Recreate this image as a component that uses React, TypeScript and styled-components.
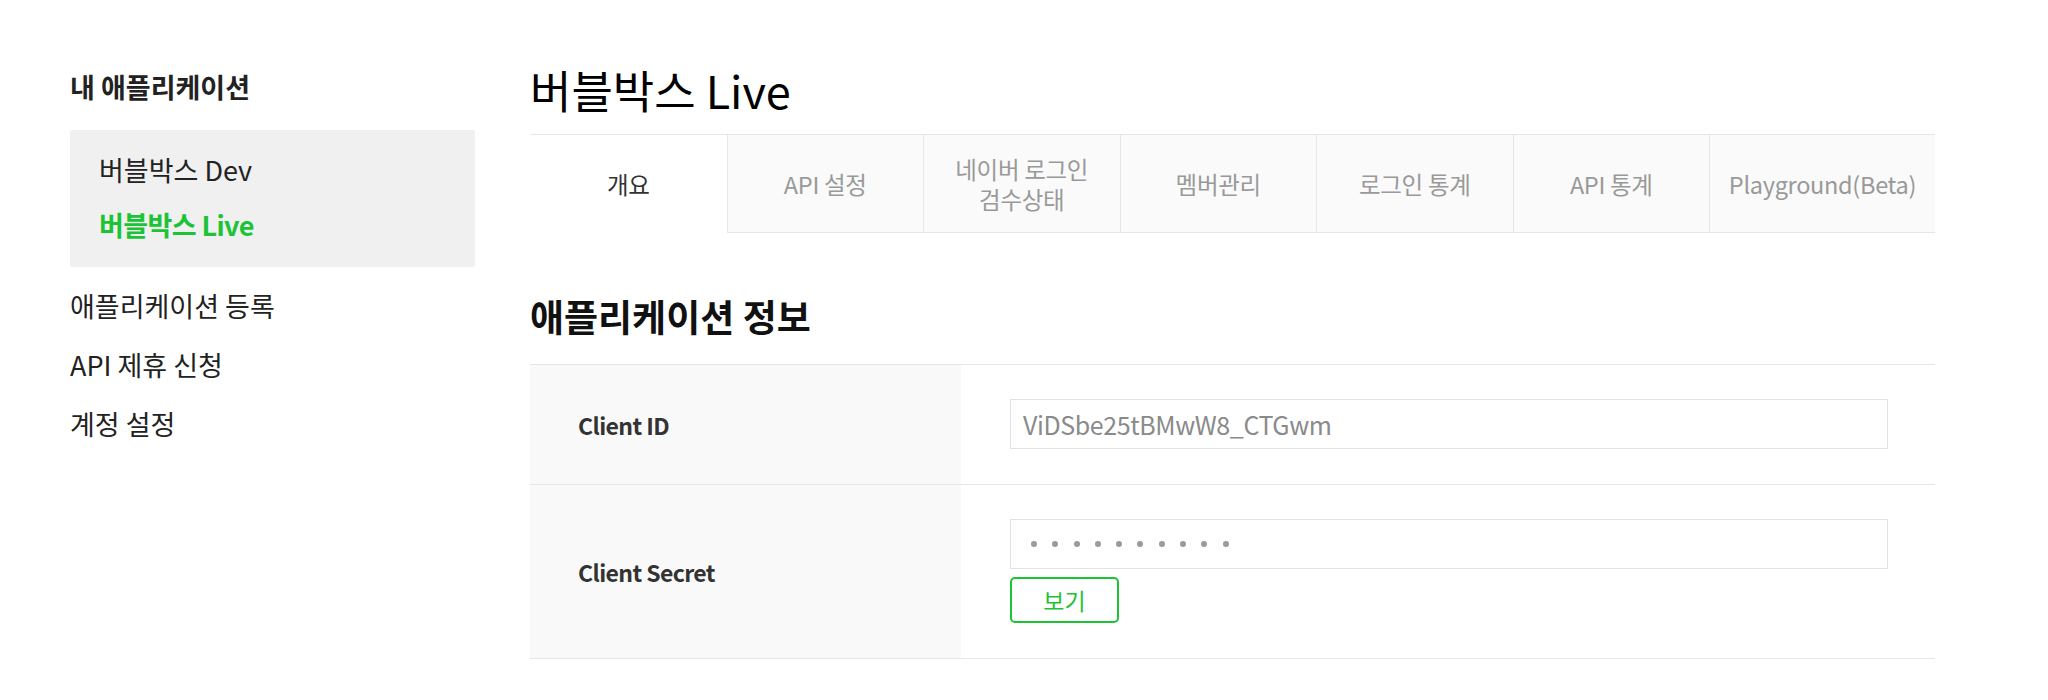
import React from "react";
import styled, { createGlobalStyle } from "styled-components";

const GREEN = "#1cc335";
const FONT = `"Noto Sans CJK KR", "Noto Sans", "Liberation Sans", sans-serif`;

const Global = createGlobalStyle`
  html, body { margin: 0; padding: 0; background: #fff; }
  body { font-family: ${FONT}; color: #222; -webkit-font-smoothing: antialiased; }
  * { box-sizing: border-box; }
`;

const Page = styled.div`
  display: flex;
  align-items: flex-start;
  gap: 55px;
  padding: 66px 0 40px 70px;
`;

const Sidebar = styled.nav`
  width: 405px;
  flex: none;
  padding-top: 3px;
  display: flex;
  flex-direction: column;
`;

const SideHeading = styled.h2`
  margin: 0;
  font-size: 27px;
  line-height: 36px;
  font-weight: 700;
  color: #222;
`;

const AppBox = styled.div`
  margin-top: 25px;
  background: #f0f0f0;
  border-radius: 2px;
  padding: 22px 29px 24px;
  display: flex;
  flex-direction: column;
  gap: 19px;
`;

const AppItem = styled.a<{ $active?: boolean }>`
  font-size: 27px;
  line-height: 36px;
  font-weight: ${(p) => (p.$active ? 700 : 400)};
  color: ${(p) => (p.$active ? GREEN : "#222")};
  letter-spacing: ${(p) => (p.$active ? "-0.6px" : "0")};
  text-decoration: none;
`;

const SideLinks = styled.div`
  margin-top: 21px;
  display: flex;
  flex-direction: column;
  gap: 23px;
`;

const SideLink = styled.a`
  font-size: 27px;
  line-height: 36px;
  color: #222;
  text-decoration: none;
`;

const Main = styled.main`
  width: 1405px;
  flex: none;
`;

const Title = styled.h1`
  margin: 0;
  font-size: 45px;
  line-height: 48px;
  font-weight: 400;
  color: #000;
`;

const Tabs = styled.ul`
  margin: 20px 0 0;
  padding: 0;
  list-style: none;
  display: grid;
  grid-template-columns: repeat(6, 1fr) 1.15fr;
  border-top: 1px solid #e6e6e6;
  height: 99px;
`;

const Tab = styled.li<{ $active?: boolean }>`
  display: flex;
  flex-direction: column;
  align-items: center;
  justify-content: center;
  text-align: center;
  font-size: 23.5px;
  letter-spacing: -0.3px;
  color: ${(p) => (p.$active ? "#333" : "#999")};
  background: ${(p) => (p.$active ? "#fff" : "#fafafa")};
  border-bottom: 1px solid ${(p) => (p.$active ? "transparent" : "#e6e6e6")};
  & + & {
    border-left: 1px solid #e6e6e6;
  }
`;

const TabLine = styled.span`
  display: block;
  line-height: 34px;
  & + & {
    margin-top: -4px;
  }
`;

const SectionTitle = styled.h3`
  margin: 61px 0 0;
  font-size: 37px;
  line-height: 44px;
  font-weight: 700;
  color: #111;
`;

const InfoTable = styled.div`
  margin-top: 26px;
  border-bottom: 1px solid #e6e6e6;
`;

const InfoRow = styled.div`
  display: grid;
  grid-template-columns: 431px 1fr;
  border-top: 1px solid #e6e6e6;
`;

const Label = styled.div`
  background: #f9f9f9;
  display: flex;
  align-items: center;
  padding-left: 48px;
  font-size: 23px;
  font-weight: 700;
  color: #333;
  letter-spacing: -0.6px;
`;

const Value = styled.div`
  padding: 34px 47px 35px 49px;
  display: flex;
  flex-direction: column;
  align-items: flex-start;
  gap: 8px;
`;

const Field = styled.div`
  width: 100%;
  height: 50px;
  border: 1px solid #e3e3e3;
  background: #fff;
  display: flex;
  align-items: center;
  padding: 0 12px;
  font-size: 25px;
  color: #8a8a8a;
  letter-spacing: -0.4px;
`;

const Mask = styled.div`
  display: flex;
  align-items: center;
  gap: 15.3px;
  padding-left: 8px;
`;

const Dot = styled.span`
  width: 6px;
  height: 6px;
  border-radius: 50%;
  background: #9a9a9a;
`;

const ShowButton = styled.button`
  width: 109px;
  height: 46px;
  border: 2px solid ${GREEN};
  border-radius: 5px;
  background: #fff;
  color: ${GREEN};
  font-family: ${FONT};
  font-size: 23px;
  padding: 0;
  cursor: pointer;
`;

const tabs = [
  ["개요"],
  ["API 설정"],
  ["네이버 로그인", "검수상태"],
  ["멤버관리"],
  ["로그인 통계"],
  ["API 통계"],
  ["Playground(Beta)"],
];

export default function App() {
  return (
    <>
      <Global />
      <Page>
        <Sidebar>
          <SideHeading>내 애플리케이션</SideHeading>
          <AppBox>
            <AppItem>버블박스 Dev</AppItem>
            <AppItem $active>버블박스 Live</AppItem>
          </AppBox>
          <SideLinks>
            <SideLink>애플리케이션 등록</SideLink>
            <SideLink>API 제휴 신청</SideLink>
            <SideLink>계정 설정</SideLink>
          </SideLinks>
        </Sidebar>
        <Main>
          <Title>버블박스 Live</Title>
          <Tabs>
            {tabs.map((lines, i) => (
              <Tab key={lines.join(" ")} $active={i === 0}>
                {lines.map((line) => (
                  <TabLine key={line}>{line}</TabLine>
                ))}
              </Tab>
            ))}
          </Tabs>
          <SectionTitle>애플리케이션 정보</SectionTitle>
          <InfoTable>
            <InfoRow>
              <Label>Client ID</Label>
              <Value>
                <Field>ViDSbe25tBMwW8_CTGwm</Field>
              </Value>
            </InfoRow>
            <InfoRow>
              <Label>Client Secret</Label>
              <Value>
                <Field>
                  <Mask>
                    {Array.from({ length: 10 }).map((_, i) => (
                      <Dot key={i} />
                    ))}
                  </Mask>
                </Field>
                <ShowButton>보기</ShowButton>
              </Value>
            </InfoRow>
          </InfoTable>
        </Main>
      </Page>
    </>
  );
}
